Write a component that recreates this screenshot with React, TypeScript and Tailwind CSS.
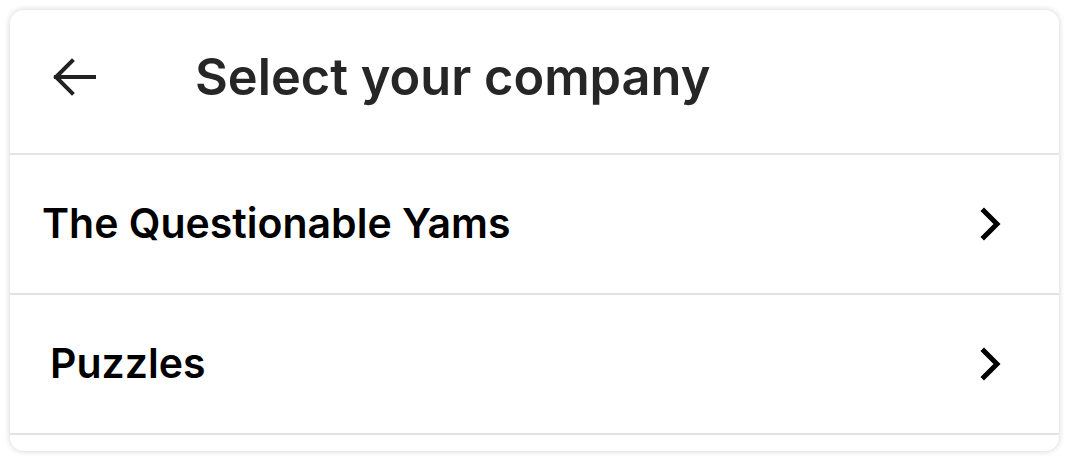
const companies = [
  { name: "The Questionable Yams", pad: "pl-[32px]" },
  { name: "Puzzles", pad: "pl-[40px]" },
];

export default function App() {
  return (
    <div className="w-[1069px] h-[461px] bg-white p-[10px] font-['Inter','Liberation_Sans',sans-serif]">
      <div className="h-[441px] rounded-[14px] bg-white shadow-[0_0_6px_rgba(0,0,0,0.18)] overflow-hidden flex flex-col">
        {/* header */}
        <div className="h-[145px] shrink-0 flex items-center pb-[10px] border-b-2 border-[#e4e4e4] shadow-[0_1px_3px_rgba(0,0,0,0.06)]">
          <button className="ml-[40px] w-[46px] h-[46px] flex items-center justify-center text-[#222]" aria-label="Back">
            <svg width="46" height="46" viewBox="0 0 46 46" fill="none" stroke="currentColor" strokeWidth="4" strokeLinecap="square">
              <path d="M44 23H6" />
              <path d="M22 7L6 23l16 16" />
            </svg>
          </button>
          <h1 className="ml-[99px] text-[50.5px] font-semibold text-[#262626]">Select your company</h1>
        </div>

        {/* companies */}
        <ul className="flex flex-col">
          {companies.map((c) => (
            <li
              key={c.name}
              className={`h-[140px] flex items-center justify-between border-b-2 border-[#e2e2e2] bg-white ${c.pad} pr-[56px]`}
            >
              <span className="text-[41px] font-semibold text-black">{c.name}</span>
              <svg width="24" height="34" viewBox="0 0 24 34" fill="none" stroke="black" strokeWidth="5" strokeLinecap="square">
                <path d="M5 4l13 13L5 30" />
              </svg>
            </li>
          ))}
        </ul>
      </div>
    </div>
  );
}
